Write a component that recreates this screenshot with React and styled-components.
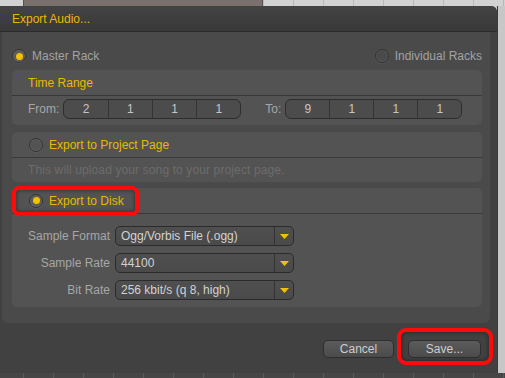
import React from "react";
import styled, { createGlobalStyle } from "styled-components";

const Global = createGlobalStyle`
  html, body { margin: 0; padding: 0; }
  body {
    width: 505px; height: 378px; overflow: hidden;
    font-family: "Liberation Sans", Arial, sans-serif;
    font-size: 12px;
  }
`;

const YELLOW = "#e9b900";

const Screen = styled.div`
  width: 505px;
  height: 378px;
  display: flex;
  flex-direction: column;
  overflow: hidden;
  background: #c9c9c9;
`;

const gridLines = (line) => `
  background-image: repeating-linear-gradient(
    90deg,
    transparent 0 23px,
    ${line} 23px 24px,
    transparent 24px 30px
  );
`;

const TopStrip = styled.div`
  height: 6px;
  flex: none;
  display: flex;
  background-color: #d2d2d2;
  ${gridLines("#b9b9b9")}
`;

const Clip = styled.div`
  margin-left: 23px;
  width: 240px;
  background: #7a716c;
  border-left: 1px solid #555;
  border-right: 1px solid #555;
  box-sizing: border-box;
`;

const Middle = styled.div`
  flex: none;
  height: 367px;
  display: flex;
`;

const RightStrip = styled.div`
  flex: 1;
  background: #c7c7c7;
  border-left: 1px solid #3a3a3a;
`;

const BottomStrip = styled.div`
  flex: 1;
  background-color: #464646;
  ${gridLines("#5a5a5a")}
`;

const Dialog = styled.div`
  width: 497px;
  display: flex;
  flex-direction: column;
  background: #414141;
  border-top-right-radius: 6px;
  overflow: hidden;
`;

const TitleBar = styled.div`
  height: 25px;
  flex: none;
  display: flex;
  align-items: center;
  padding-left: 12px;
  color: ${YELLOW};
  font-size: 12px;
  background: linear-gradient(#434343, #393939);
  border-bottom: 1px solid #2c2c2c;
`;

const Body = styled.div`
  flex: 1;
  display: flex;
  flex-direction: column;
  padding-left: 2px;
`;

const MainPanel = styled.div`
  width: 488px;
  box-sizing: border-box;
  background: #4a4a4a;
  border-radius: 0 0 6px 6px;
  padding: 12px 8px 16px 10px;
  display: flex;
  flex-direction: column;
`;

const ModeRow = styled.div`
  height: 24px;
  margin-bottom: 2px;
  display: flex;
  align-items: center;
  justify-content: space-between;
`;

const RadioLabel = styled.label`
  display: flex;
  align-items: center;
  gap: 6px;
  color: ${(p) => (p.$accent ? YELLOW : "#a2a2a2")};
  font-size: 12px;
`;

const RadioCircle = styled.span`
  width: 14px;
  height: 14px;
  box-sizing: border-box;
  border-radius: 50%;
  border: 1px solid #343434;
  background: ${(p) => (p.$checked ? "#5a5a5a" : "transparent")};
  box-shadow: inset 0 0 0 1px rgba(255, 255, 255, 0.07), 0 1px 0 rgba(255, 255, 255, 0.05);
  display: flex;
  align-items: center;
  justify-content: center;
  &::after {
    content: "";
    display: ${(p) => (p.$checked ? "block" : "none")};
    width: 7px;
    height: 7px;
    border-radius: 50%;
    background: #f2c200;
  }
`;

const Radio = ({ checked, children, accent }) => (
  <RadioLabel $accent={accent}>
    <RadioCircle $checked={checked} />
    {children}
  </RadioLabel>
);

const Panel = styled.section`
  position: relative;
  background: #535353;
  border-radius: 5px;
  display: flex;
  flex-direction: column;
  margin-top: ${(p) => p.$gap || 0}px;
`;

const PanelHeader = styled.div`
  height: 25px;
  flex: none;
  display: flex;
  align-items: center;
  padding-left: ${(p) => (p.$radio ? 17 : 16)}px;
  border-bottom: 1px solid #383838;
  color: ${YELLOW};
`;

const TimeRow = styled.div`
  height: 29px;
  box-sizing: border-box;
  padding: 3px 0 0 16px;
  display: flex;
  align-items: flex-start;
`;

const FieldLabel = styled.span`
  color: #a6a6a6;
  line-height: 20px;
  margin-right: 4px;
  margin-left: ${(p) => p.$offset || 0}px;
`;

const TimeBox = styled.div`
  width: ${(p) => p.$w}px;
  height: 20px;
  box-sizing: border-box;
  border: 1px solid #2e2e2e;
  border-radius: 6px;
  background: #4c4c4c;
  display: flex;
`;

const TimeSeg = styled.span`
  flex: 1;
  display: flex;
  align-items: center;
  justify-content: center;
  color: #c6c6c6;
  & + & {
    border-left: 1px solid #333;
  }
`;

const Description = styled.div`
  height: 24px;
  display: flex;
  align-items: center;
  padding-left: 16px;
  color: #6c6c6c;
  letter-spacing: 0.12px;
`;

const FormBody = styled.div`
  padding: 12px 0 7px 0;
  display: flex;
  flex-direction: column;
  gap: 7px;
`;

const FormRow = styled.div`
  display: flex;
  align-items: center;
  gap: 5px;
`;

const RowLabel = styled.span`
  width: 98px;
  text-align: right;
  color: #a6a6a6;
`;

const Select = styled.div`
  width: 179px;
  height: 20px;
  box-sizing: border-box;
  border: 1px solid #2b2b2b;
  border-radius: 5px;
  background: linear-gradient(#4f4f4f, #4a4a4a);
  display: flex;
`;

const SelectValue = styled.span`
  flex: 1;
  padding-left: 5px;
  display: flex;
  align-items: center;
  color: #d2d2d2;
  white-space: nowrap;
`;

const SelectArrow = styled.span`
  width: 18px;
  border-left: 1px solid #333;
  display: flex;
  align-items: center;
  justify-content: center;
`;

const Highlight = styled.div`
  position: absolute;
  pointer-events: none;
  box-sizing: border-box;
  border: 4px solid #ff0a0a;
  border-radius: ${(p) => p.$r || 7}px;
  box-shadow: inset 0 0 4px rgba(0, 0, 0, 0.5);
`;

const DiskHighlight = styled(Highlight)`
  left: 0;
  top: -2px;
  width: 127px;
  height: 30px;
`;

const Footer = styled.div`
  flex: 1;
  display: flex;
  justify-content: flex-end;
  align-items: center;
  gap: 14px;
  padding: 2px 16px 0 0;
`;

const ButtonWrap = styled.div`
  position: relative;
  display: flex;
`;

const SaveHighlight = styled(Highlight)`
  left: -11px;
  right: -12px;
  top: -12px;
  bottom: -7px;
  border-radius: 9px;
`;

const Button = styled.button`
  width: ${(p) => p.$w}px;
  height: 18px;
  box-sizing: border-box;
  border: 1px solid #2e2e2e;
  border-radius: 5px;
  background: linear-gradient(#5b5b5b, #4b4b4b);
  color: #cdcdcd;
  font-family: "Liberation Sans", Arial, sans-serif;
  font-size: 12px;
  padding: 0;
  display: flex;
  align-items: center;
  justify-content: center;
`;

const Arrow = () => (
  <svg width="9" height="5" viewBox="0 0 9 5">
    <polygon points="0,0 9,0 4.5,5" fill="#f2c200" />
  </svg>
);

const formats = [
  ["Sample Format", "Ogg/Vorbis File (.ogg)"],
  ["Sample Rate", "44100"],
  ["Bit Rate", "256 kbit/s (q 8, high)"],
];

export default function App() {
  return (
    <>
      <Global />
      <Screen>
        <TopStrip>
          <Clip />
        </TopStrip>
        <Middle>
          <Dialog>
            <TitleBar>Export Audio...</TitleBar>
            <Body>
              <MainPanel>
                <ModeRow>
                  <Radio checked>Master Rack</Radio>
                  <Radio>Individual Racks</Radio>
                </ModeRow>
                <Panel>
                  <PanelHeader>Time Range</PanelHeader>
                  <TimeRow>
                    <FieldLabel>From:</FieldLabel>
                    <TimeBox $w={178}>
                      {["2", "1", "1", "1"].map((v, i) => (
                        <TimeSeg key={i}>{v}</TimeSeg>
                      ))}
                    </TimeBox>
                    <FieldLabel $offset={24}>To:</FieldLabel>
                    <TimeBox $w={177}>
                      {["9", "1", "1", "1"].map((v, i) => (
                        <TimeSeg key={i}>{v}</TimeSeg>
                      ))}
                    </TimeBox>
                  </TimeRow>
                </Panel>
                <Panel $gap={7}>
                  <PanelHeader $radio>
                    <Radio accent>Export to Project Page</Radio>
                  </PanelHeader>
                  <Description>This will upload your song to your project page.</Description>
                </Panel>
                <Panel $gap={6}>
                  <PanelHeader $radio>
                    <Radio accent checked>
                      Export to Disk
                    </Radio>
                  </PanelHeader>
                  <DiskHighlight />
                  <FormBody>
                    {formats.map(([label, value]) => (
                      <FormRow key={label}>
                        <RowLabel>{label}</RowLabel>
                        <Select>
                          <SelectValue>{value}</SelectValue>
                          <SelectArrow>
                            <Arrow />
                          </SelectArrow>
                        </Select>
                      </FormRow>
                    ))}
                  </FormBody>
                </Panel>
              </MainPanel>
              <Footer>
                <Button $w={71}>Cancel</Button>
                <ButtonWrap>
                  <Button $w={73}>Save...</Button>
                  <SaveHighlight />
                </ButtonWrap>
              </Footer>
            </Body>
          </Dialog>
          <RightStrip />
        </Middle>
        <BottomStrip />
      </Screen>
    </>
  );
}
